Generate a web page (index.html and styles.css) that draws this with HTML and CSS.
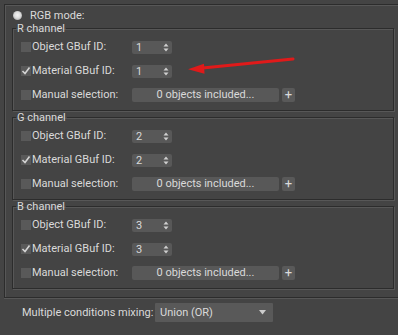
FILE: index.html
```html
<!DOCTYPE html>
<html lang="en">
<head>
    <meta charset="UTF-8">
    <title>RGB mode</title>
    <link rel="stylesheet" href="styles.css">
</head>
<body>
    <div class="panel">
        <label class="radio-row"><span class="radio"></span>RGB mode:</label>

        <fieldset class="group">
            <legend>R channel</legend>
            <div class="row">
                <span class="check"></span><span class="label">Object GBuf ID:</span>
                <div class="spinner"><span>1</span><svg width="6" height="9" viewBox="0 0 6 9"><path d="M0.5 3.5 L3 0.5 L5.5 3.5Z M0.5 5.5 L5.5 5.5 L3 8.5Z"/></svg></div>
            </div>
            <div class="row">
                <span class="check on"><svg width="10" height="10" viewBox="0 0 10 10"><path d="M1.5 5 L4 7.5 L8.5 1.5"/></svg></span><span class="label">Material GBuf ID:</span>
                <div class="spinner"><span>1</span><svg width="6" height="9" viewBox="0 0 6 9"><path d="M0.5 3.5 L3 0.5 L5.5 3.5Z M0.5 5.5 L5.5 5.5 L3 8.5Z"/></svg></div>
            </div>
            <div class="row">
                <span class="check"></span><span class="label">Manual selection:</span>
                <div class="objects">0 objects included...</div>
                <div class="plus">+</div>
            </div>
        </fieldset>

        <fieldset class="group">
            <legend>G channel</legend>
            <div class="row">
                <span class="check"></span><span class="label">Object GBuf ID:</span>
                <div class="spinner"><span>2</span><svg width="6" height="9" viewBox="0 0 6 9"><path d="M0.5 3.5 L3 0.5 L5.5 3.5Z M0.5 5.5 L5.5 5.5 L3 8.5Z"/></svg></div>
            </div>
            <div class="row">
                <span class="check on"><svg width="10" height="10" viewBox="0 0 10 10"><path d="M1.5 5 L4 7.5 L8.5 1.5"/></svg></span><span class="label">Material GBuf ID:</span>
                <div class="spinner"><span>2</span><svg width="6" height="9" viewBox="0 0 6 9"><path d="M0.5 3.5 L3 0.5 L5.5 3.5Z M0.5 5.5 L5.5 5.5 L3 8.5Z"/></svg></div>
            </div>
            <div class="row">
                <span class="check"></span><span class="label">Manual selection:</span>
                <div class="objects">0 objects included...</div>
                <div class="plus">+</div>
            </div>
        </fieldset>

        <fieldset class="group">
            <legend>B channel</legend>
            <div class="row">
                <span class="check"></span><span class="label">Object GBuf ID:</span>
                <div class="spinner"><span>3</span><svg width="6" height="9" viewBox="0 0 6 9"><path d="M0.5 3.5 L3 0.5 L5.5 3.5Z M0.5 5.5 L5.5 5.5 L3 8.5Z"/></svg></div>
            </div>
            <div class="row">
                <span class="check on"><svg width="10" height="10" viewBox="0 0 10 10"><path d="M1.5 5 L4 7.5 L8.5 1.5"/></svg></span><span class="label">Material GBuf ID:</span>
                <div class="spinner"><span>3</span><svg width="6" height="9" viewBox="0 0 6 9"><path d="M0.5 3.5 L3 0.5 L5.5 3.5Z M0.5 5.5 L5.5 5.5 L3 8.5Z"/></svg></div>
            </div>
            <div class="row">
                <span class="check"></span><span class="label">Manual selection:</span>
                <div class="objects">0 objects included...</div>
                <div class="plus">+</div>
            </div>
        </fieldset>
    </div>

    <div class="mixing">
        <span class="mix-label">Multiple conditions mixing:</span>
        <div class="dropdown"><span>Union (OR)</span><svg width="7" height="5" viewBox="0 0 7 5"><path d="M0 0 L7 0 L3.5 4.5Z"/></svg></div>
    </div>

    <!-- red annotation arrow -->
    <svg class="note-arrow" width="398" height="335" viewBox="0 0 398 335">
        <path d="M293 59 L200 68.3" stroke="#e01a1a" stroke-width="3" stroke-linecap="round" fill="none"/>
        <path d="M188 69.3 L204 63.8 L204.5 73.8Z" fill="#e01a1a"/>
    </svg>
</body>
</html>
```

FILE: styles.css
```css
html, body {
    margin: 0;
    overflow: hidden;
}
body {
    background-color: #444444;
    color: #dadada;
    font-family: Roboto, "Liberation Sans", sans-serif;
    font-size: 11px;
    position: relative;
    height: 335px;
}

/* outer rollout frame, runs off the right edge */
.panel {
    margin: 4px 0 0 4px;
    padding: 3px 0 8px 7px;
    border: 1px solid #2c2c2c;
    border-right: none;
    box-shadow: 0 1px 0 #575757, inset 1px 1px 0 #575757;
}

.radio-row {
    display: flex;
    align-items: center;
    height: 14px;
    margin-left: 1px;
}
.radio {
    width: 9px;
    height: 9px;
    border-radius: 50%;
    background: radial-gradient(circle at 50% 45%, #f4f4f4 0, #dcdcdc 45%, #8a8a8a 100%);
    margin-right: 8px;
}

.group {
    margin: 0 4px 0 0;
    padding: 5px 8px 8px 8px;
    border: 1px solid #2c2c2c;
    box-shadow: 1px 1px 0 #575757, inset 1px 1px 0 #575757;
    min-width: 0;
}
.group legend {
    padding: 0 1px;
    margin-left: -5px;
    line-height: 13px;
}

.row {
    display: flex;
    align-items: center;
    height: 14px;
    margin-bottom: 10px;
}
.row:last-child {
    margin-bottom: 0;
}

.check {
    width: 10px;
    height: 10px;
    background-color: #595959;
    margin-right: 1px;
    flex: none;
}
.check svg {
    display: block;
}
.check svg path {
    fill: none;
    stroke: #d4d4d4;
    stroke-width: 1.6;
}

.label {
    width: 100px;
    flex: none;
    line-height: 14px;
}

.spinner {
    width: 40px;
    height: 13px;
    background-color: #585858;
    border-radius: 2px;
    display: flex;
    align-items: center;
    justify-content: space-between;
    padding: 0 3px 0 4px;
    box-sizing: border-box;
}
.spinner svg path {
    fill: #cfcfcf;
}

.objects {
    width: 147px;
    height: 14px;
    line-height: 14px;
    background-color: #585858;
    border-radius: 2px;
    text-align: center;
}
.plus {
    width: 13px;
    height: 14px;
    line-height: 13px;
    margin-left: 3px;
    background-color: #595959;
    border-radius: 2px;
    text-align: center;
    font-size: 13px;
}

.mixing {
    display: flex;
    align-items: center;
    margin-top: 5px;
    padding-left: 22px;
}
.mix-label {
    width: 133px;
}
.dropdown {
    width: 118px;
    height: 19px;
    background-color: #595959;
    border-radius: 1px;
    display: flex;
    align-items: center;
    justify-content: space-between;
    padding: 0 7px 0 5px;
    box-sizing: border-box;
}
.dropdown svg path {
    fill: #cccccc;
}

.note-arrow {
    position: absolute;
    left: 0;
    top: 0;
    pointer-events: none;
}
```
